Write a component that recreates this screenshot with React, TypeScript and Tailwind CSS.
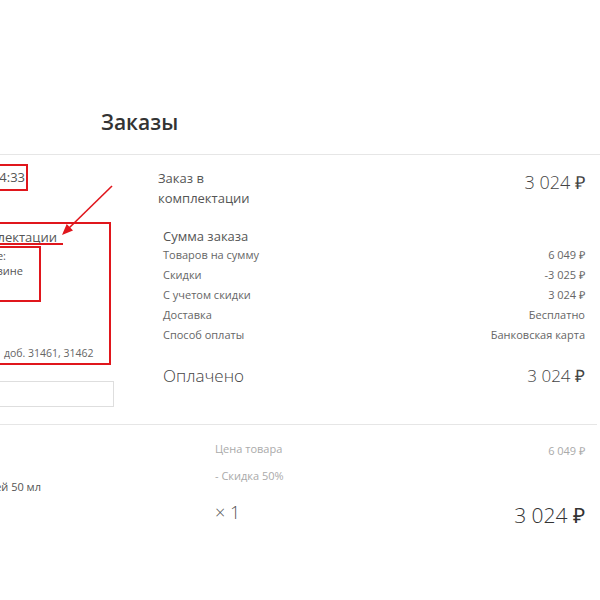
import type { ReactNode } from 'react';

const SUMMARY = [
  ['Товаров на сумму', '6 049 ₽'],
  ['Скидки', '-3 025 ₽'],
  ['С учетом скидки', '3 024 ₽'],
  ['Доставка', 'Бесплатно'],
  ['Способ оплаты', 'Банковская карта'],
] as const;

// a line of text that ends at `w` px and is cut off on the left edge of the page
function Clip({ w, className, children }: { w: string; className?: string; children: ReactNode }) {
  return (
    <div className={`flex justify-end overflow-hidden whitespace-nowrap ${w} ${className ?? ''}`}>
      <span>{children}</span>
    </div>
  );
}

export default function App() {
  return (
    <div className="relative w-[600px] h-[600px] overflow-hidden bg-white font-['Open_Sans',sans-serif] text-[#555]">
      <h1 className="pt-[109px] pl-[101px] text-[21px] leading-[26px] font-semibold text-[#333]">Заказы</h1>
      <div className="mt-[19px] h-px bg-[#e6e6e6]" />

      <div className="flex h-[269px]">
        <div className="w-[115px] shrink-0">
          <Clip w="w-[25px]" className="pt-[12px] text-[13px] leading-[20px]">12.03.2021 14:33</Clip>
          <Clip w="w-[57px]" className="mt-[40px] text-[13px] leading-[20px]">Статус: в комплектации</Clip>
          <div className="mt-px text-[11px] leading-[15px]">
            <Clip w="w-[6px]">Получение:</Clip>
            <Clip w="w-[23px]">в магазине</Clip>
          </div>
          <div className="mt-[67px] pl-[4px] text-[10.5px] leading-[16px] text-[#666] whitespace-nowrap">
            доб. 31461, 31462
          </div>
          <div className="mt-[20px] h-[26px] w-[114px] border border-l-0 border-[#dedede]" />
        </div>

        <div className="ml-[43px] w-[427px]">
          <div className="flex justify-between items-start pt-[13px]">
            <div className="text-[13px] leading-[20px]">
              <div>Заказ в</div>
              <div>комплектации</div>
            </div>
            <div className="mt-[3px] text-[18px] leading-[22px] font-light text-[#444]">3 024 ₽</div>
          </div>

          <div className="mt-[19px] pl-[5px]">
            <div className="text-[13px] leading-[18px]">Сумма заказа</div>
            {SUMMARY.map(([label, value]) => (
              <div key={label} className="flex justify-between text-[11px] leading-[20px] text-[#666]">
                <span>{label}</span>
                <span>{value}</span>
              </div>
            ))}
            <div className="mt-[19px] flex justify-between text-[17px] leading-[24px] font-light text-[#444]">
              <span>Оплачено</span>
              <span>3 024 ₽</span>
            </div>
          </div>
        </div>
      </div>

      <div className="h-px w-[597px] bg-[#e6e6e6]" />

      <div className="flex">
        <div className="w-[115px] shrink-0">
          <Clip w="w-[41px]" className="mt-[54px] text-[11px] leading-[16px]">Парфюмерный спрей 50 мл</Clip>
        </div>
        <div className="ml-[100px] w-[370px] text-[11px] text-[#aaa]">
          <div className="mt-[16px] flex justify-between leading-[16px]">
            <span>Цена товара</span>
            <span className="mt-[2px]">6 049 ₽</span>
          </div>
          <div className="mt-[9px] leading-[16px]">- Скидка 50%</div>
          <div className="mt-[17px] flex justify-between items-start">
            <span className="text-[18px] leading-[22px] font-light text-[#555]">× 1</span>
            <span className="mt-px text-[21px] leading-[26px] font-light text-[#333]">3 024 ₽</span>
          </div>
        </div>
      </div>

      {/* red annotation marks drawn over the screenshot */}
      <div className="absolute left-[-4px] top-[164px] h-[27px] w-[32px] border-2 border-[#e0161c]" />
      <div className="absolute left-[-4px] top-[222px] h-[143px] w-[115px] border-2 border-[#e0161c]" />
      <div className="absolute left-0 top-[243px] h-[2px] w-[63px] bg-[#e0161c]" />
      <div className="absolute left-[-4px] top-[246px] h-[56px] w-[45px] border-2 border-[#e0161c]" />
      <svg className="absolute left-0 top-0" width="600" height="600" viewBox="0 0 600 600">
        <line x1="112" y1="186" x2="68" y2="229" stroke="#e0161c" strokeWidth="1.6" />
        <polygon points="62,235 73,230.5 66.7,224" fill="#e0161c" />
      </svg>
    </div>
  );
}
